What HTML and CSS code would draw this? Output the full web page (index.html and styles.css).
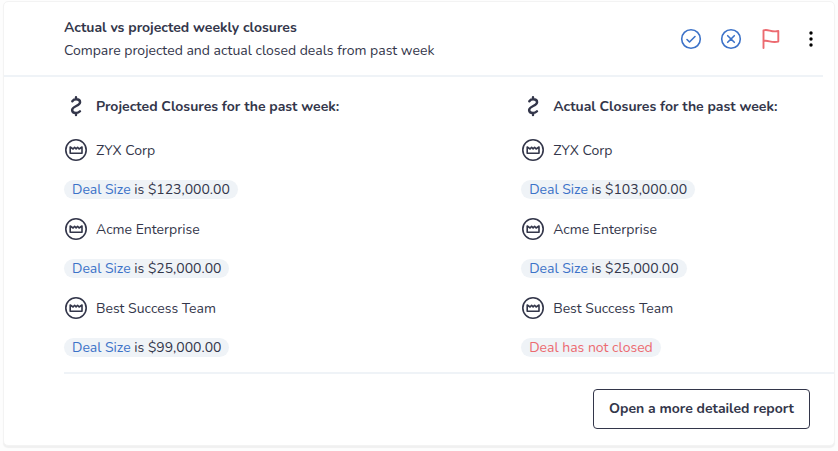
FILE: index.html
```html
<!DOCTYPE html>
<html lang="en">

<head>
    <meta charset="utf-8">
    <meta name="viewport" content="width=device-width, initial-scale=1">
    <title>Weekly closures</title>
    <link rel="stylesheet" href="styles.css">
</head>

<body>
    <!-- Shared icons -->
    <svg class="sprite" aria-hidden="true">
        <symbol id="dollar" viewBox="0 0 24 24">
            <path d="M12 3.200v2M12 19v2M8.300 7.200C9.300 5.900 10.600 5.300 12.200 5.300c2.400 0 3.900 1.200 3.900 3 0 3.800-8 3.600-8 7.700 0 1.900 1.700 3 3.900 3 1.800 0 3-.6 4-1.700"/>
        </symbol>
        <symbol id="crown" viewBox="0 0 24 24">
            <circle cx="12" cy="12" r="10.200"/>
            <path d="M6.200 9l2.900 2L10.600 9.300 12.100 10.900l1.500-1.600L15.100 11l2.900-2v6.200H6.200z"/>
        </symbol>
    </svg>

    <div class="card">
        <div class="header">
            <div class="heading">
                <h1>Actual vs projected weekly closures</h1>
                <p>Compare projected and actual closed deals from past week</p>
            </div>
            <div class="actions">
                <button class="icon-button blue" aria-label="Accept">
                    <svg class="icon" viewBox="0 0 24 24"><circle cx="12" cy="12" r="9.300"/><path d="M8 12.500l2.500 2.500L16 9.500"/></svg>
                </button>
                <button class="icon-button blue" aria-label="Dismiss">
                    <svg class="icon" viewBox="0 0 24 24"><circle cx="12" cy="12" r="9.300"/><path d="M8.700 8.700l6.600 6.600M15.300 8.700l-6.600 6.600"/></svg>
                </button>
                <button class="icon-button red flag" aria-label="Flag">
                    <svg class="icon" viewBox="0 0 24 24"><path d="M4.500 21V3.300c5-1.800 7.500 2.500 14.800.7v10.600c-7.300 1.900-9.800-2.100-14.800-.6"/></svg>
                </button>
                <button class="icon-button dots" aria-label="More">
                    <svg class="icon" viewBox="0 0 24 24"><circle cx="12" cy="6" r="1.700"/><circle cx="12" cy="12" r="1.700"/><circle cx="12" cy="18" r="1.700"/></svg>
                </button>
            </div>
        </div>

        <div class="columns">
            <!-- Projected -->
            <div class="column">
                <h2 class="row"><svg class="icon dollar"><use href="#dollar"/></svg>Projected Closures for the past week:</h2>
                <div class="row"><svg class="icon"><use href="#crown"/></svg>ZYX Corp</div>
                <div class="pill"><span class="blue">Deal Size</span> is $123,000.00</div>
                <div class="row"><svg class="icon"><use href="#crown"/></svg>Acme Enterprise</div>
                <div class="pill"><span class="blue">Deal Size</span> is $25,000.00</div>
                <div class="row"><svg class="icon"><use href="#crown"/></svg>Best Success Team</div>
                <div class="pill"><span class="blue">Deal Size</span> is $99,000.00</div>
            </div>

            <!-- Actual -->
            <div class="column">
                <h2 class="row"><svg class="icon dollar"><use href="#dollar"/></svg>Actual Closures for the past week:</h2>
                <div class="row"><svg class="icon"><use href="#crown"/></svg>ZYX Corp</div>
                <div class="pill"><span class="blue">Deal Size</span> is $103,000.00</div>
                <div class="row"><svg class="icon"><use href="#crown"/></svg>Acme Enterprise</div>
                <div class="pill"><span class="blue">Deal Size</span> is $25,000.00</div>
                <div class="row"><svg class="icon"><use href="#crown"/></svg>Best Success Team</div>
                <div class="pill red">Deal has not closed</div>
            </div>
        </div>

        <div class="footer">
            <button class="report-button">Open a more detailed report</button>
        </div>
    </div>
</body>

</html>
```

FILE: styles.css
```css
* {
    box-sizing: border-box;
}

body {
    margin: 0;
    padding: 1px 3px 4px;
    background-color: #fdfdfd;
    color: #33364a;
    font-family: Nunito, "Open Sans", sans-serif;
    font-size: 14px;
    line-height: 19px;
}

h1,
h2,
p {
    margin: 0;
    font-size: 14px;
}

h1,
h2 {
    font-weight: 700;
}

.sprite {
    display: none;
}

.card {
    background-color: #fff;
    border: 1px solid #f3f3f3;
    border-radius: 5px;
    box-shadow: 0 2px 1px #f0f0f0;
}

.header {
    display: flex;
    align-items: center;
    justify-content: space-between;
    margin-right: 11px;
    padding: 14px 0 13px 60px;
    border-bottom: 2px solid #eff3f7;
}

.heading {
    line-height: 23px;
}

.actions {
    display: flex;
    gap: 16px;
}

.icon-button {
    padding: 0;
    border: none;
    background: none;
    cursor: pointer;
}

.icon {
    display: block;
    flex-shrink: 0;
    width: 24px;
    height: 24px;
    fill: none;
    stroke: currentColor;
    stroke-width: 1.6;
    stroke-linejoin: round;
    stroke-linecap: round;
}

.dollar {
    stroke-width: 2.4;
}

.flag .icon {
    stroke-width: 1.9;
}

.blue {
    color: #3c72c8;
}

.red {
    color: #ec6a70;
}

.dots {
    color: #000;
}

.dots .icon {
    fill: currentColor;
    stroke: none;
}

.columns {
    display: grid;
    grid-template-columns: 3fr 2fr;
    margin-left: 60px;
    padding: 15px 8px 15px 0;
    border-bottom: 2px solid #eff3f7;
}

.column {
    display: flex;
    flex-direction: column;
    align-items: flex-start;
    gap: 18px;
}

.row {
    display: flex;
    align-items: center;
    gap: 8px;
}

h2.row {
    height: 28px;
}

.pill {
    padding: 0 8px;
    border-radius: 10px;
    background-color: #eff3f7;
}

.footer {
    display: flex;
    justify-content: flex-end;
    padding: 15px 24px 16px;
}

.report-button {
    height: 40px;
    padding: 0 15px 2px;
    border: 1px solid #33364a;
    border-radius: 4px;
    background-color: #fff;
    color: #33364a;
    font: inherit;
    font-weight: 700;
    cursor: pointer;
}
```
